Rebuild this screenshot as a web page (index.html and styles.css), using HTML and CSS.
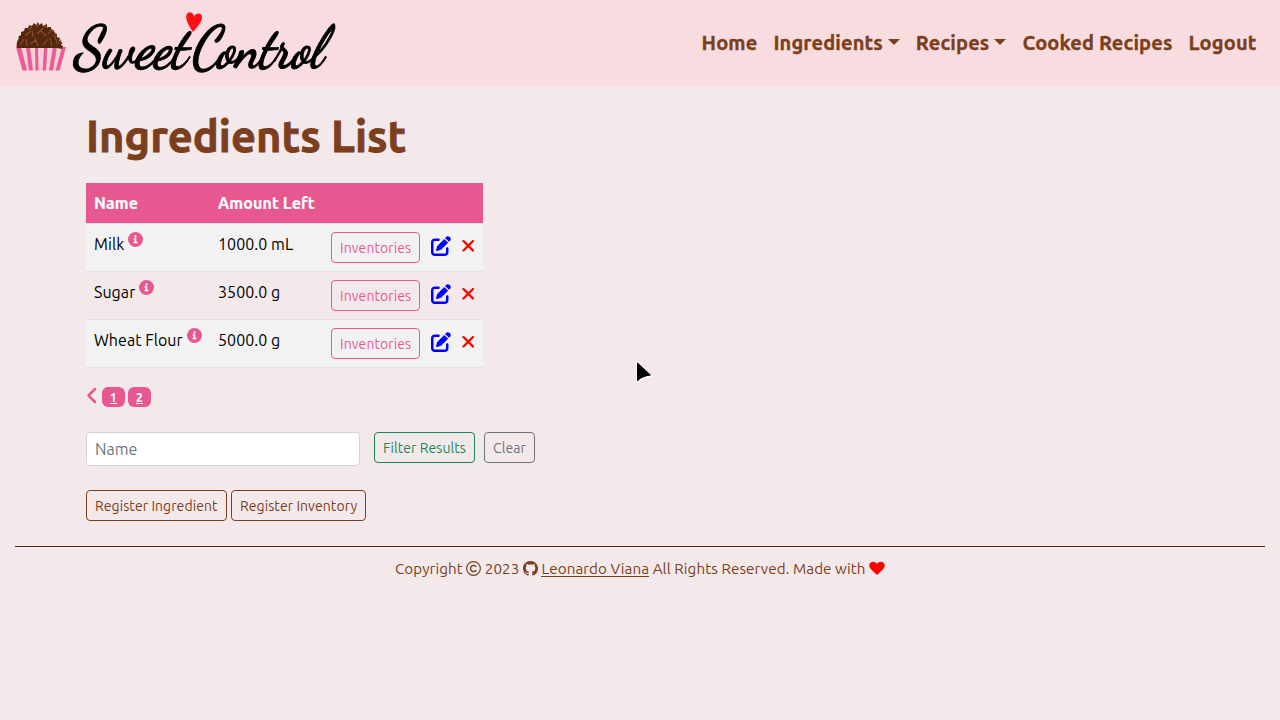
FILE: index.html
```
<!DOCTYPE html>
<html lang="en">
<head>
<meta charset="utf-8">
<title>Sweet Control</title>
<link rel="stylesheet" href="styles.css">
</head>
<body>
<svg width="0" height="0" class="defs">
  <symbol id="info" viewBox="0 0 512 512"><path fill="#e85890" d="M256 512A256 256 0 1 0 256 0a256 256 0 1 0 0 512z"/><path fill="#fff" d="M190 210h92v120h36v50H190v-50h36v-70h-36z"/><circle cx="256" cy="150" r="36" fill="#fff"/></symbol>
  <symbol id="edit" viewBox="0 0 512 512"><path fill="#00f" d="M471.600 21.400c-21.900-21.900-57.300-21.900-79.200 0L362.300 51.700l97.900 97.900 30.100-30.100c21.900-21.900 21.900-57.300 0-79.200L471.600 21.400zM172.400 241.700c-6.100 6.100-10.800 13.600-13.500 21.900l-29.600 88.800c-2.900 8.600-.6 18.100 5.800 24.600s15.900 8.700 24.600 5.800l88.800-29.600c8.200-2.700 15.700-7.400 21.900-13.500L437.700 172.300 339.700 74.300 172.400 241.700zM96 64C43 64 0 107 0 160V416c0 53 43 96 96 96H352c53 0 96-43 96-96V320c0-17.700-14.300-32-32-32s-32 14.300-32 32v96c0 17.700-14.300 32-32 32H96c-17.700 0-32-14.300-32-32V160c0-17.700 14.300-32 32-32h96c17.700 0 32-14.300 32-32s-14.300-32-32-32H96z"/></symbol>
  <symbol id="cross" viewBox="0 0 14 14"><path d="M2.500 2l9.500 9.500M12 2l-9.500 9.500" stroke="red" stroke-width="2.400" stroke-linecap="round"/></symbol>
</svg>
<header class="navbar">
  <svg class="logo" width="340" height="77" viewBox="8 8 340 77">
    <path fill="#f7d3d5" d="M16 47h50l-6 23.500H22z"/>
    <path fill="#ea5b98" d="M16 47h5l6 23.500h-4.500zM26 47h4l3 23.500h-4zM35 47h3l.5 23.500h-3zM44 47h3.500l-1.500 23.500h-3.500zM53 47h4l-4 23.500h-4zM62 47h4l-6.500 23.500h-4z"/>
    <path fill="#54280f" d="M17 48c-1-4 0-7 2-10l-1-1 3-2 0-3 3-1 1-3 3 0 1-3 3 1 2-3 2 2 2-3 1 3 3-2 1 3 4-2 0 3 4 0 0 3 3 0 0 3 3 1 0 3 3 1-1 3 3 1-1 3 2 1-1 3-5-1H22z"/>
    <path fill="none" stroke="#8d4e29" stroke-width="1.100" d="M20 45l4-6M27 46l-1-7M30 44l6-4M38 46l-3-8M43 45l5-6M52 46l-2-8M58 45l-3-8M62 44l-3-6M25 36l6-5M33 37l-1-7M37 34l6-6M46 36l-5-5M48 34l4-5M53 36l4 0M36 27l3-3M44 26l4 2M28 30l4-3M55 33l-4-4"/>
    <g class="wordmark">
      <text x="72" y="67" textLength="114" lengthAdjust="spacingAndGlyphs" transform="translate(12) skewX(-10)">Sweet</text>
      <text x="190" y="67" textLength="132" lengthAdjust="spacingAndGlyphs" transform="translate(12) skewX(-10)">Control</text>
    </g>
    <path fill="#fb1115" d="M193 32c-4-6-7-11-6.800-15.500.2-5 6-6 8 0 2-4.500 8-3.500 7.800 1-.2 4-4 9-9 14.500z"/>
  </svg>
  <nav class="menu">
    <a>Home</a>
    <a>Ingredients<i class="caret"></i></a>
    <a>Recipes<i class="caret"></i></a>
    <a>Cooked Recipes</a>
    <a>Logout</a>
  </nav>
</header>
<main class="container">
  <h1>Ingredients List</h1>
  <div class="table">
    <div class="row head"><div>Name</div><div>Amount Left</div><div></div></div>
    <div class="row odd"><div>Milk<svg class="info"><use href="#info"/></svg></div><div>1000.0 mL</div><div><a class="btn pink">Inventories</a><svg class="edit"><use href="#edit"/></svg><svg class="cross"><use href="#cross"/></svg></div></div>
    <div class="row"><div>Sugar<svg class="info"><use href="#info"/></svg></div><div>3500.0 g</div><div><a class="btn pink">Inventories</a><svg class="edit"><use href="#edit"/></svg><svg class="cross"><use href="#cross"/></svg></div></div>
    <div class="row odd"><div>Wheat Flour<svg class="info"><use href="#info"/></svg></div><div>5000.0 g</div><div><a class="btn pink">Inventories</a><svg class="edit"><use href="#edit"/></svg><svg class="cross"><use href="#cross"/></svg></div></div>
  </div>
  <div class="pager">
    <svg width="12" height="18" viewBox="0 0 12 18"><path d="M9 2L2.500 8.500 9 15" fill="none" stroke="#e85890" stroke-width="2.500" stroke-linecap="round" stroke-linejoin="round"/></svg>
    <a class="page">1</a><a class="page">2</a>
  </div>
  <form class="filter">
    <input type="text" placeholder="Name">
    <a class="btn green">Filter Results</a>
    <a class="btn gray">Clear</a>
  </form>
  <div class="register"><a class="btn brown wide">Register Ingredient</a><a class="btn brown">Register Inventory</a></div>
</main>
<footer class="footer">
  <span>Copyright</span>
  <svg width="15" height="15" viewBox="0 0 16 16" fill="none" stroke="#7b3f20" stroke-width="1.300"><circle cx="8" cy="8" r="7.300"/><path d="M10.900 6.300A3.300 3.300 0 1 0 10.900 9.700" stroke-width="1.500"/></svg>
  <span>2023</span>
  <svg width="15" height="15" viewBox="0 0 16 16"><path fill="#7b3f20" d="M8 0C3.580 0 0 3.580 0 8c0 3.540 2.290 6.530 5.470 7.590.4.070.55-.17.55-.38 0-.19-.01-.82-.01-1.490-2.010.37-2.530-.49-2.690-.94-.09-.23-.48-.94-.82-1.130-.28-.15-.68-.52-.01-.53.63-.01 1.080.58 1.230.82.72 1.210 1.870.87 2.330.66.07-.52.28-.87.51-1.070-1.780-.2-3.640-.89-3.640-3.950 0-.87.31-1.590.82-2.150-.08-.2-.36-1.020.08-2.120 0 0 .67-.21 2.200.82.64-.18 1.320-.27 2-.27s1.360.09 2 .27c1.530-1.040 2.200-.82 2.200-.82.44 1.100.16 1.920.08 2.120.51.56.82 1.270.82 2.150 0 3.070-1.870 3.750-3.650 3.950.29.25.54.73.54 1.480 0 1.070-.01 1.930-.01 2.200 0 .21.15.46.55.38A8.010 8.010 0 0 0 16 8c0-4.420-3.580-8-8-8"/></svg>
  <a class="author">Leonardo Viana</a>
  <span>All Rights Reserved. Made with</span>
  <svg width="16" height="15" viewBox="0 0 16 15"><path fill="red" d="M8 14L1.500 7.800C-.5 5.500 0 2.500 2.300 1.300 4.500.2 6.500 1 8 2.800 9.500 1 11.500.2 13.700 1.300 16 2.500 16.500 5.500 14.500 7.800z"/></svg>
</footer>
<svg class="pointer" width="20" height="25" viewBox="0 0 20 25"><path d="M2.500 2v19.500c2.500-3.500 6-5.500 14-6.500z" stroke="#fff" stroke-width="2" stroke-linejoin="round"/><path d="M2.500 2v18c2.500-3.500 6-5 13-6z" stroke="#000" stroke-linejoin="round"/></svg>
</body>
</html>
```
FILE: styles.css
```
*{box-sizing:border-box}
body{margin:0;background:#f4e9ea;font:16px/24px "Ubuntu","Noto Sans",sans-serif;color:#000}
svg{display:block;flex:none}
.defs,.pointer{position:absolute}
.pointer{left:635px;top:361px}
.navbar{height:86px;background:#f8dcdf;display:flex;justify-content:space-between;padding:8px 15.5px 0 8px}
.wordmark{font:700 60px/1.3 "Dancing Script","Kaushan Script","Liberation Serif",serif;stroke:#000;stroke-width:1px}
.menu{display:flex;font-size:20px;font-weight:700;letter-spacing:.14px;color:#7b3f20;white-space:nowrap;-webkit-text-stroke:.35px}
.menu a{padding:23px 8px 0}
.caret{display:inline-block;margin-left:5px;vertical-align:5.1px;border:6px solid transparent;border-top-color:#7b3f20;border-bottom:0}
.container{padding:22px 86px 0}
h1{margin:0;height:75px;font-size:43.5px;font-weight:700;line-height:55px;color:#7b3f20;-webkit-text-stroke:.8px}
.table{width:397px;letter-spacing:.05px}
.row{display:grid;grid-template-columns:124px 113px 160px;height:48px;border-bottom:1px solid #dee2e6}
.row>div{padding:8px 8px 0;display:flex;align-items:flex-start;white-space:nowrap}
.row.head{height:41px;color:#fff;font-weight:700;letter-spacing:.1px}
.row.head>div{background:#e85890;-webkit-text-stroke:.2px}
.odd{background:#f2f2f2}
.info{width:15px;height:15px;margin-left:4px}
.edit{width:20px;height:20px;margin:4px 0 0 11px}
.cross{width:14px;height:14px;margin:7px 0 0 10px}
.btn{display:inline-block;height:31px;padding:5px 8px 3px;border:1px solid;border-radius:4px;font-size:14px;line-height:21px;letter-spacing:.08px;white-space:nowrap}
.pink{color:#e85890;width:89px}
.green{color:#198754;width:101px;margin-left:14px}
.gray{color:#6c757d;width:51px;margin-left:9px}
.brown{color:#7b3f20;width:135px}
.brown.wide{width:141px}
.pager{display:flex;height:20px;margin-top:19px}
.page{width:23px;height:20px;margin-left:3px;border-radius:6px;background:#e85890;color:#fff;font-size:12px;font-weight:700;line-height:21px;text-align:center;text-decoration:underline}
.pager svg+.page{margin-left:4px}
.filter{display:flex;margin:25px 0 24px}
.filter input{width:274px;height:34px;padding:0 8px;border:1px solid #ced4da;border-radius:4px;background:#fff;font:16px "Ubuntu","Noto Sans",sans-serif}
.filter input::placeholder{color:#6c757d}
.register{display:flex;gap:4px;height:31px}
.footer{display:flex;justify-content:center;align-items:flex-start;gap:3.5px;margin:25px 15px 0;padding-top:10px;border-top:1px solid #4a2511;font-size:15.2px;letter-spacing:.08px;color:#7b3f20}
.footer svg{margin-top:4px}
.author{height:20px;border-bottom:1px solid #7b3f20}
```
